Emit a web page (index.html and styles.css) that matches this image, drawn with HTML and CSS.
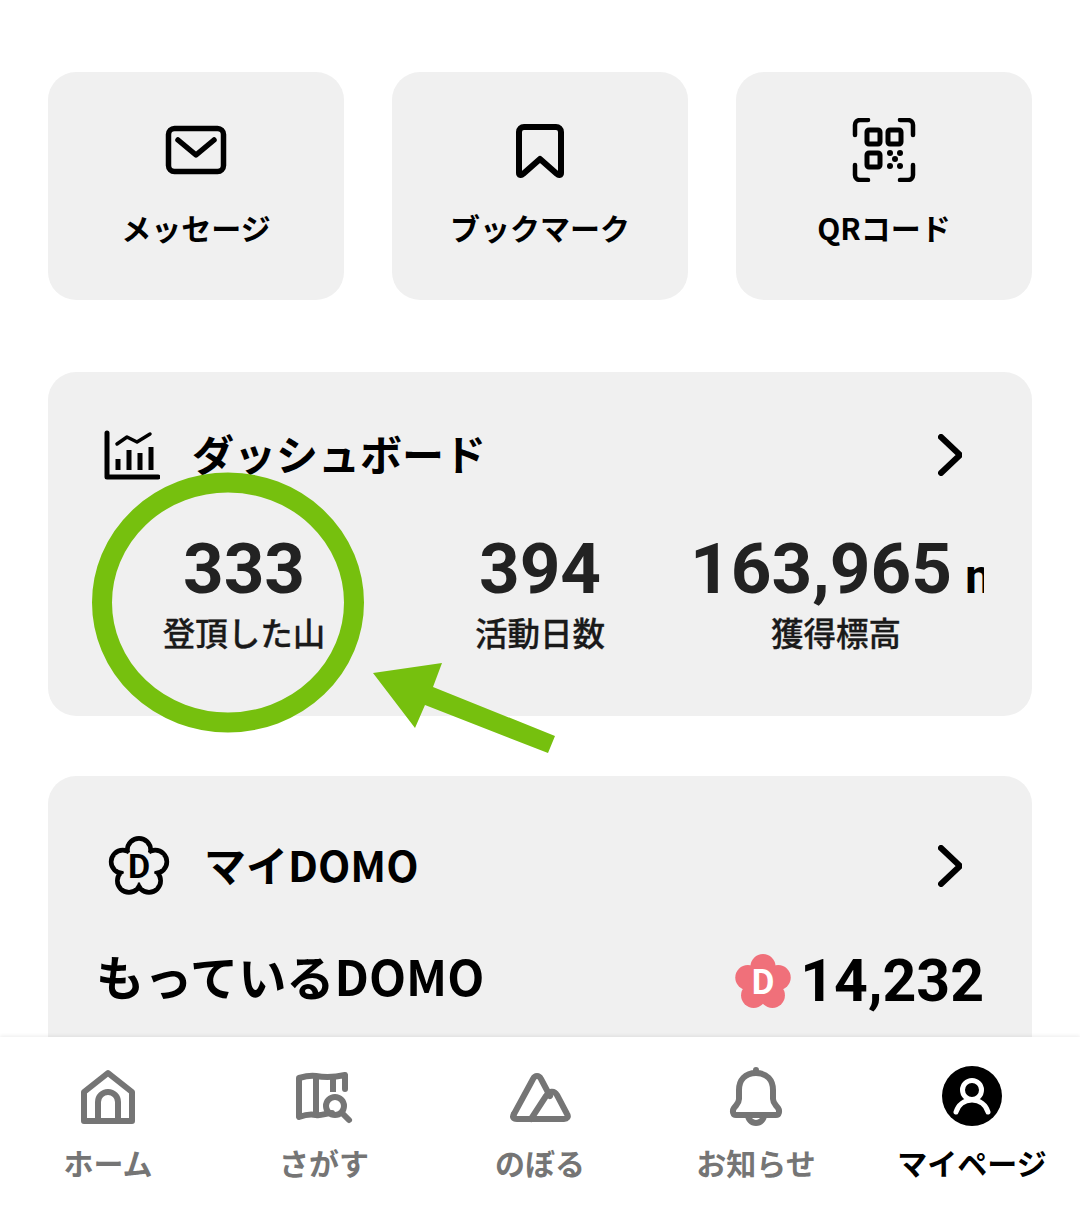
FILE: index.html
```html
<!DOCTYPE html>
<html lang="ja">
<head>
  <meta charset="UTF-8">
  <meta name="viewport" content="width=device-width, initial-scale=1.0">
  <title>マイページ</title>
  <link rel="stylesheet" href="styles.css">
</head>
<body>
  <div class="page">
    <main class="content">
      <div class="tiles">
        <a class="tile">
          <svg class="tile-icon" width="64" height="64" viewBox="0 0 64 64" fill="none" stroke="#000" stroke-width="5.5" stroke-linecap="round" stroke-linejoin="round">
            <rect x="4.5" y="10.5" width="55" height="43" rx="6"/>
            <path d="M14 22l18 15 18-15"/>
          </svg>
          <span>メッセージ</span>
        </a>
        <a class="tile">
          <svg class="tile-icon" width="64" height="64" viewBox="0 0 64 64" fill="none" stroke="#000" stroke-width="6" stroke-linecap="round" stroke-linejoin="round">
            <path d="M11 14a5 5 0 0 1 5-5h32a5 5 0 0 1 5 5v41c0 2-2 3-4 1L32 41 15 56c-2 2-4 1-4-1z"/>
          </svg>
          <span>ブックマーク</span>
        </a>
        <a class="tile">
          <svg class="tile-icon" width="64" height="64" viewBox="0 0 64 64" fill="none" stroke="#000" stroke-width="4.5" stroke-linecap="round" stroke-linejoin="round">
            <path d="M3 17V7a5 5 0 0 1 5-5h8M48 2h8a5 5 0 0 1 5 5v10M3 47v10a5 5 0 0 0 5 5h8M48 62h8a5 5 0 0 0 5-5V47"/>
            <rect x="15" y="12" width="13" height="14" rx="2" stroke-width="5"/>
            <rect x="36" y="12" width="13" height="14" rx="2" stroke-width="5"/>
            <rect x="15" y="35" width="13" height="14" rx="2" stroke-width="5"/>
            <g fill="#000" stroke="none">
              <circle cx="38" cy="35" r="3"/><circle cx="48" cy="35" r="3"/>
              <circle cx="43" cy="41" r="3"/>
              <circle cx="38" cy="48" r="3"/><circle cx="48" cy="48" r="3"/>
            </g>
          </svg>
          <span>QRコード</span>
        </a>
      </div>

      <section class="card dashboard">
        <div class="card-head dash-head">
          <svg class="head-icon" width="56" height="50" viewBox="0 0 56 50" fill="none" stroke="#000" stroke-width="5" stroke-linecap="round" stroke-linejoin="round">
            <path d="M3 3v44h51"/>
            <path d="M13 14l10-7 10 5 13-8" stroke-width="3.5"/>
            <path d="M14 29v11M25 20v20M36 23v17M47 17v23" stroke-linecap="butt"/>
          </svg>
          <h2 class="head-title dash-title">ダッシュボード</h2>
          <svg class="chevron" width="24" height="42" viewBox="0 0 24 42" fill="none" stroke="#000" stroke-width="6" stroke-linecap="round" stroke-linejoin="round">
            <path d="M3 3l19 18L3 39"/>
          </svg>
        </div>
        <div class="stats">
          <div class="stat">
            <div class="stat-value">333</div>
            <div class="stat-label">登頂した山</div>
          </div>
          <div class="stat">
            <div class="stat-value">394</div>
            <div class="stat-label">活動日数</div>
          </div>
          <div class="stat">
            <div class="stat-value stat-value-long">163,965<span class="stat-unit">m</span></div>
            <div class="stat-label">獲得標高</div>
          </div>
        </div>
      </section>

      <section class="card domo">
        <div class="card-head domo-head">
          <svg class="head-icon" width="62" height="60" viewBox="0 0 60 58">
            <g fill="none" stroke="#000" stroke-width="7">
              <circle cx="30" cy="13.5" r="10"/><circle cx="45.7" cy="24.9" r="10"/><circle cx="39.7" cy="43.3" r="10"/><circle cx="20.3" cy="43.3" r="10"/><circle cx="14.3" cy="24.9" r="10"/>
            </g>
            <g fill="#f0f0f0">
              <circle cx="30" cy="13.5" r="9"/><circle cx="45.7" cy="24.9" r="9"/><circle cx="39.7" cy="43.3" r="9"/><circle cx="20.3" cy="43.3" r="9"/><circle cx="14.3" cy="24.9" r="9"/>
              <circle cx="30" cy="29" r="16"/>
            </g>
            <text class="flower-d" x="30" y="41" text-anchor="middle">D</text>
          </svg>
          <h2 class="head-title domo-title">マイDOMO</h2>
          <svg class="chevron" width="24" height="42" viewBox="0 0 24 42" fill="none" stroke="#000" stroke-width="6" stroke-linecap="round" stroke-linejoin="round">
            <path d="M3 3l19 18L3 39"/>
          </svg>
        </div>
        <div class="domo-row">
          <span class="domo-label">もっているDOMO</span>
          <span class="domo-amount">
            <svg width="58" height="57" viewBox="0 0 60 58">
              <g fill="#f0707a">
                <circle cx="30" cy="13.5" r="13"/><circle cx="45.7" cy="24.9" r="13"/><circle cx="39.7" cy="43.3" r="13"/><circle cx="20.3" cy="43.3" r="13"/><circle cx="14.3" cy="24.9" r="13"/>
                <circle cx="30" cy="29" r="14"/>
              </g>
              <text class="flower-d flower-d-light" x="30" y="42" text-anchor="middle">D</text>
            </svg>
            <span>14,232</span>
          </span>
        </div>
      </section>
    </main>

    <nav class="tabbar">
      <a class="tab">
        <svg width="60" height="60" viewBox="0 0 60 60" fill="none" stroke="#757575" stroke-width="6" stroke-linejoin="round">
          <path d="M6 26L30 7l24 19v29H6z"/>
          <path d="M20 55V36a10 10 0 0 1 20 0v19"/>
        </svg>
        <span>ホーム</span>
      </a>
      <a class="tab">
        <svg width="60" height="60" viewBox="0 0 60 60" fill="none" stroke="#757575" stroke-width="6" stroke-linecap="round" stroke-linejoin="round">
          <path d="M38 47c-6 0-10 3-16 2-4-1-9-1-17 2V12c7-2 11-3 17-2s15 2 29-1v14"/>
          <path d="M22 10v39M39 10v16" stroke-linecap="butt"/>
          <circle cx="41" cy="40" r="9"/>
          <path d="M48 47l7 7"/>
        </svg>
        <span>さがす</span>
      </a>
      <a class="tab">
        <svg width="64" height="60" viewBox="0 0 64 60" fill="none" stroke="#757575" stroke-width="6" stroke-linecap="round" stroke-linejoin="round">
          <path d="M6 48L25 13c2-4 6-4 8 0l9 17"/>
          <path d="M23 53l15-23c3-5 8-6 11-1l10 19c2 3 0 5-3 5H9c-4 0-5-2-3-5"/>
        </svg>
        <span>のぼる</span>
      </a>
      <a class="tab">
        <svg width="60" height="64" viewBox="0 0 60 64" fill="none" stroke="#757575" stroke-width="6" stroke-linecap="round" stroke-linejoin="round">
          <path d="M30 9c-11 0-17 7-17 17v9c0 4-2 5-5 9-2 3-1 7 2 7h40c3 0 4-4 2-7-3-4-5-5-5-9v-9C47 16 41 9 30 9z"/>
          <path d="M30 6v3M22 51a8 8 0 0 0 16 0"/>
        </svg>
        <span>お知らせ</span>
      </a>
      <a class="tab tab-active">
        <svg width="60" height="60" viewBox="0 0 60 60">
          <circle cx="30" cy="30" r="30" fill="#000"/>
          <g fill="none" stroke="#fff" stroke-width="5" stroke-linecap="round">
            <circle cx="30" cy="24" r="9.5"/>
            <path d="M14 46c2-7 8-12 16-12s14 5 16 12"/>
          </g>
        </svg>
        <span>マイページ</span>
      </a>
    </nav>

    <svg class="annotation" width="1080" height="1217" viewBox="0 0 1080 1217">
      <ellipse cx="228" cy="602.5" rx="126" ry="120" fill="none" stroke="#76c00e" stroke-width="20"/>
      <path d="M373 673l69-10-9 24 122 49-7 17-123-48-10 23z" fill="#76c00e"/>
    </svg>
  </div>
</body>
</html>
```

FILE: styles.css
```css
* {
  box-sizing: border-box;
}
body {
  margin: 0;
  background-color: #fff;
  font-family: "Noto Sans CJK JP", "Noto Sans", sans-serif;
  color: #000;
}
.page {
  position: relative;
  display: flex;
  flex-direction: column;
  height: 1217px;
  overflow: hidden;
}
.content {
  height: 1037px;
  overflow: hidden;
  padding: 72px 48px 0;
}

/* top tiles */
.tiles {
  display: grid;
  grid-template-columns: repeat(3, 296px);
  gap: 48px;
}
.tile {
  display: flex;
  flex-direction: column;
  align-items: center;
  height: 228px;
  padding-top: 46px;
  background-color: #f0f0f0;
  border-radius: 28px;
  font-size: 30px;
  font-weight: 700;
  line-height: 44px;
}
.tile-icon {
  margin-bottom: 23px;
}

/* cards */
.card {
  background-color: #f0f0f0;
  border-radius: 28px;
}
.dashboard {
  height: 344px;
  margin-top: 72px;
  padding: 56px 48px 0;
}
.domo {
  height: 320px;
  margin-top: 60px;
  padding: 63px 48px 0;
}
.card-head {
  display: flex;
  align-items: center;
  height: 54px;
  padding-right: 22px;
}
.head-title {
  margin: -6px 0 0;
  font-weight: 700;
  flex: 1;
}
.dash-head {
  padding-left: 8px;
}
.dash-title {
  margin-left: 32px;
  font-size: 42px;
}
.domo-head {
  padding-left: 12px;
}
.domo-title {
  margin-left: 34px;
  font-size: 42px;
}

/* dashboard numbers */
.stats {
  display: grid;
  grid-template-columns: repeat(3, 296px);
  margin-top: 47px;
}
.stat {
  text-align: center;
}
.stat-value {
  font-family: Roboto, "Liberation Sans", sans-serif;
  font-size: 71px;
  font-weight: 700;
  line-height: 80px;
  color: #222;
  white-space: nowrap;
}
.stat-value-long {
  overflow-x: clip;
  text-indent: 2px;
}
.stat-unit {
  margin-left: 13px;
  font-size: 48px;
  line-height: 1;
  color: #000;
}
.stat-label {
  font-size: 32.5px;
  font-weight: 500;
  line-height: 46px;
  color: #1a1a1a;
  -webkit-text-stroke: 0.3px #1a1a1a;
}

/* DOMO */
.domo-row {
  display: flex;
  justify-content: space-between;
  align-items: flex-start;
  margin-top: 49px;
}
.domo-label {
  font-size: 48.2px;
  font-weight: 700;
  line-height: 66px;
}
.domo-amount {
  display: flex;
  align-items: center;
  gap: 8px;
  padding-top: 6px;
  font-family: Roboto, "Liberation Sans", sans-serif;
  font-size: 59px;
  font-weight: 700;
  line-height: 66px;
}
.flower-d {
  font-family: Roboto, "Liberation Sans", sans-serif;
  font-size: 33px;
  font-weight: 700;
}
.flower-d-light {
  fill: #fff;
  font-size: 36px;
}

/* bottom tabs */
.tabbar {
  position: relative;
  display: grid;
  grid-template-columns: repeat(5, 216px);
  height: 180px;
  background-color: #fff;
  box-shadow: 0 -1px 4px rgba(0, 0, 0, 0.08);
}
.tab {
  display: flex;
  flex-direction: column;
  align-items: center;
  padding-top: 27px;
  font-size: 30px;
  font-weight: 700;
  line-height: 44px;
  color: #757575;
  white-space: nowrap;
}
.tab svg {
  height: 64px;
  margin-bottom: 12px;
}
.tab-active {
  color: #000;
}

/* hand-drawn marks over the screenshot */
.annotation {
  position: absolute;
  top: 0;
  left: 0;
  pointer-events: none;
}
```
